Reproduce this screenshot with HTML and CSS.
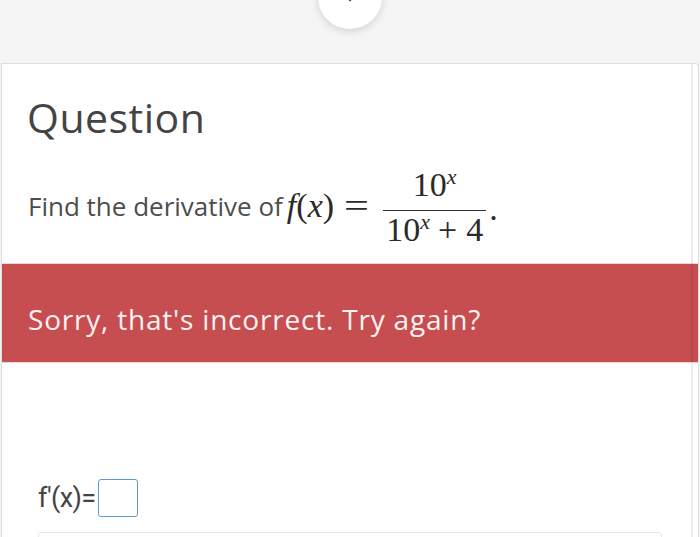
FILE: index.html
```html
<!DOCTYPE html>
<html lang="en">

<head>
  <meta charset="UTF-8">
  <meta name="viewport" content="width=device-width, initial-scale=1.0">
  <title>Question</title>
  <link rel="stylesheet" href="styles.css">
</head>

<body>
  <div class="top-bar">
    <div class="nav-circle">
      <svg width="12" height="8" viewBox="0 0 12 8"><path d="M2 1 L6 5 L10 1" fill="none" stroke="#333" stroke-width="2"/></svg>
    </div>
  </div>

  <div class="card">
    <h1 class="question-title">Question</h1>

    <p class="question-text">
      Find the derivative of
      <span class="math">
        <i>f</i>(<i>x</i>)<span class="eq">=</span><span class="frac">
          <span class="num">10<sup>x</sup></span>
          <span class="den">10<sup>x</sup><span class="plus">+</span>4</span>
        </span><span class="dot">.</span>
      </span>
    </p>

    <div class="feedback">Sorry, that's incorrect. Try again?</div>

    <div class="answer-row">
      <span class="answer-label">f'(x)=</span>
      <span class="answer-box"></span>
    </div>

    <div class="next-panel"></div>
  </div>
</body>

</html>
```

FILE: styles.css
```css
body {
  margin: 0;
  background: #f5f5f5;
  font-family: 'Open Sans', sans-serif;
  color: #4a4a4a;
  height: 537px;
  overflow: hidden;
}

.top-bar {
  height: 63px;
  display: flex;
  justify-content: center;
}

.nav-circle {
  width: 64px;
  height: 64px;
  margin-top: -35px;
  border-radius: 50%;
  background: #fff;
  box-shadow: 0 2px 8px rgba(0, 0, 0, 0.15);
  display: flex;
  align-items: flex-end;
  justify-content: center;
}

.nav-circle svg {
  margin-bottom: 26px;
}

.card {
  position: relative;
  margin-left: 1px;
  margin-right: 1px;
  background: #fff;
  border: 1px solid #dddddd;
  border-bottom: none;
  border-radius: 0 4px 0 0;
  height: 473px;
  overflow: hidden;
}

.card::after {
  content: "";
  position: absolute;
  top: 0;
  bottom: 0;
  right: 5px;
  width: 2px;
  background: rgba(0, 0, 0, 0.07);
}

.question-title {
  margin: 0;
  padding: 31px 0 0 25px;
  font-weight: 400;
  font-size: 41px;
  line-height: 44px;
  color: #444;
  letter-spacing: 0.5px;
}

.question-text {
  margin: 0;
  padding: 18px 0 0 26px;
  height: 98px;
  font-size: 26px;
  color: #4d4d4d;
  display: flex;
  align-items: center;
}

.math {
  font-family: 'Liberation Serif', serif;
  font-size: 34px;
  color: #2a2a2a;
  display: inline-flex;
  align-items: center;
  margin-left: 4px;
}

.math i {
  font-style: italic;
}

.eq {
  display: inline-block;
  margin: 0 17px 0 13px;
  transform: scaleX(1.3);
}

.frac {
  display: inline-flex;
  flex-direction: column;
  align-items: center;
  margin-top: 2px;
}

.num {
  padding: 0 8px 6px;
  border-bottom: 1.5px solid #333;
  align-self: stretch;
  text-align: center;
  line-height: 38px;
}

.den {
  padding: 0 3px;
  line-height: 38px;
}

sup {
  font-style: italic;
  font-size: 22px;
  vertical-align: 12px;
  line-height: 0;
}

.plus {
  margin: 0 9px 0 8px;
}

.dot {
  align-self: center;
  margin-top: 6px;
  margin-left: 3px;
}

.feedback {
  margin: 8px -1px 0 0;
  height: 100px;
  background: #c64d50;
  border-top: 1px solid #f0d6d6;
  border-bottom: 1px solid #f0d6d6;
  color: #fdf2f2;
  font-size: 28px;
  letter-spacing: 0.8px;
  padding: 12px 0 0 26px;
  box-sizing: border-box;
  display: flex;
  align-items: center;
  position: relative;
}

.answer-row {
  padding: 116px 0 0 36px;
  display: flex;
  align-items: center;
}

.answer-label {
  font-family: 'Roboto', sans-serif;
  font-size: 27px;
  color: #444;
  letter-spacing: -0.6px;
}

.answer-box {
  width: 38px;
  height: 36px;
  border: 1.5px solid #5b9bd1;
  border-radius: 3px;
  margin-left: 2px;
}

.next-panel {
  margin: 15px 36px 0 36px;
  height: 20px;
  border: 1px solid #e6e6e6;
  border-radius: 3px;
}
```
